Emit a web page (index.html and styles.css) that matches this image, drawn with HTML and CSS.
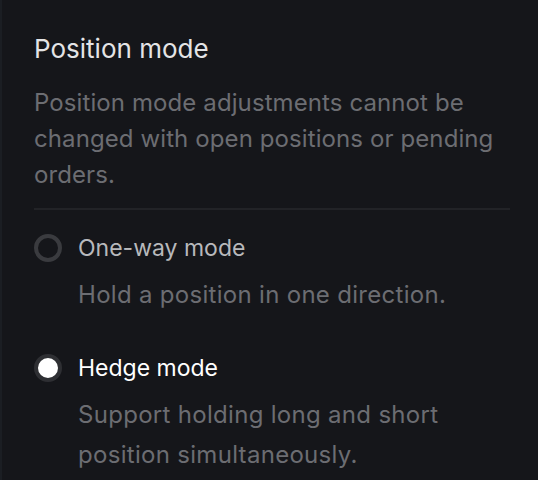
FILE: index.html
```html
<!DOCTYPE html>
<html>
<head>
<meta charset="utf-8">
<link rel="stylesheet" href="styles.css">
</head>
<body>
<div class="panel">
  <h2 class="title">Position mode</h2>
  <p class="desc">Position mode adjustments cannot be changed with open positions or pending orders.</p>
  <div class="divider"></div>
  <div class="option">
    <div class="row">
      <span class="radio"></span>
      <span class="label">One-way mode</span>
    </div>
    <p class="hint">Hold a position in one direction.</p>
  </div>
  <div class="option selected">
    <div class="row">
      <span class="radio"></span>
      <span class="label">Hedge mode</span>
    </div>
    <p class="hint">Support holding long and short position simultaneously.</p>
  </div>
</div>
</body>
</html>
```
FILE: styles.css
```css
html, body {
  margin: 0;
  padding: 0;
  background: #15161a;
  height: 100%;
}
body {
  border-left: 2px solid #1b1e23;
  box-sizing: border-box;
  font-family: Inter, "Noto Sans", sans-serif;
  overflow: hidden;
}
.panel {
  padding: 34px 28px 0 32px;
}
.title {
  margin: 0;
  font-size: 26px;
  font-weight: normal;
  color: #e4e4e6;
  line-height: 30px;
}
.desc {
  margin: 21px 0 0;
  font-size: 24px;
  line-height: 36px;
  letter-spacing: 0.1px;
  color: #6c6d72;
}
.divider {
  height: 2px;
  background: #222327;
  margin-top: 15px;
}
.option {
  margin-top: 24px;
}
.option + .option {
  margin-top: 41px;
}
.row {
  display: flex;
  align-items: center;
  gap: 16px;
  height: 28px;
}
.radio {
  width: 28px;
  height: 28px;
  border-radius: 50%;
  border: 4px solid #3a3b3f;
  box-sizing: border-box;
  flex: none;
}
.selected .radio {
  background: #ffffff;
  border-color: #2e2f33;
}
.label {
  font-size: 23px;
  line-height: 28px;
  color: #b8b9bc;
}
.selected .label {
  color: #ffffff;
}
.hint {
  margin: 15px 0 0 44px;
  font-size: 24px;
  line-height: 36px;
  letter-spacing: 0.3px;
  color: #6c6d72;
}
.selected .hint {
  margin-top: 13px;
  line-height: 40px;
}
```
